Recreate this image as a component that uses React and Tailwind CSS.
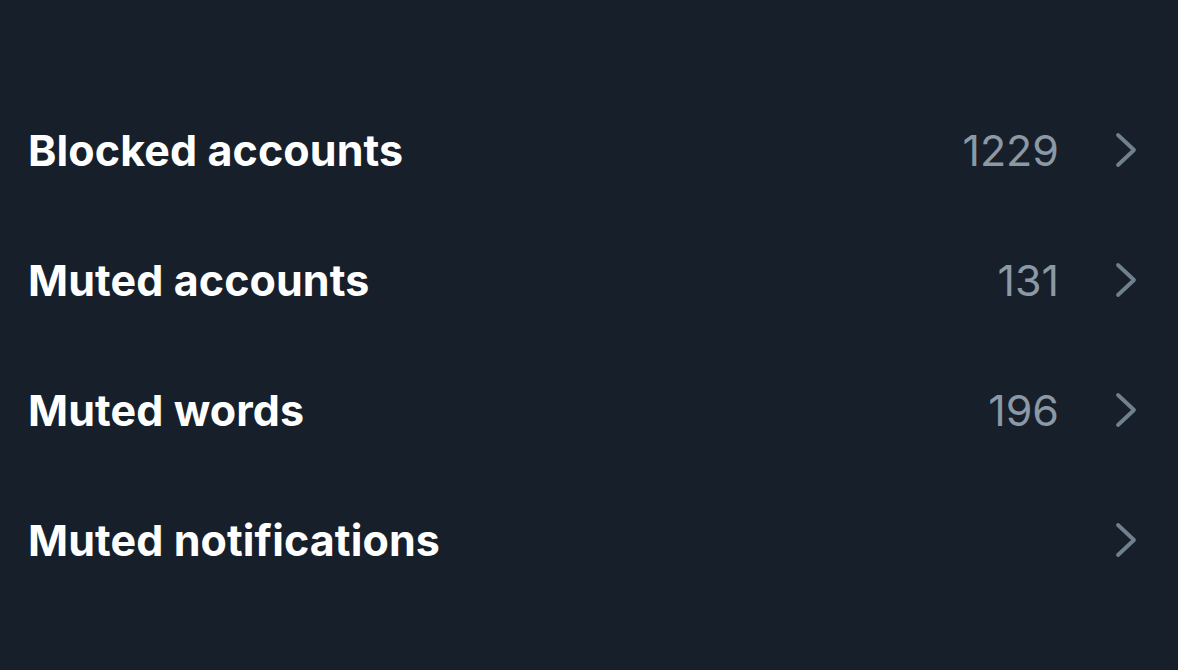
const rows = [
  { label: "Blocked accounts", count: "1229" },
  { label: "Muted accounts", count: "131" },
  { label: "Muted words", count: "196" },
  { label: "Muted notifications", count: null },
];

function Chevron() {
  return (
    <svg width="24" height="36" viewBox="0 0 24 36" className="shrink-0">
      <polyline
        points="4,3 20,18 4,33"
        fill="none"
        stroke="#71808e"
        strokeWidth="3.8"
        strokeLinecap="round"
        strokeLinejoin="round"
      />
    </svg>
  );
}

export default function App() {
  return (
    <div
      className="w-[1178px] h-[670px] bg-[#17202a] pt-[85px]"
      style={{ fontFamily: "Inter, 'Liberation Sans', sans-serif" }}
    >
      {rows.map((row) => (
        <div
          key={row.label}
          className="flex items-center h-[130px] pl-[28px] pr-[40px]"
        >
          <span className="flex-1 text-[43px] leading-none font-bold text-white tracking-[0.1px]">
            {row.label}
          </span>
          {row.count && (
            <span className="text-[43px] leading-none text-[#8b98a5] mr-[55px]">
              {row.count}
            </span>
          )}
          <Chevron />
        </div>
      ))}
    </div>
  );
}
